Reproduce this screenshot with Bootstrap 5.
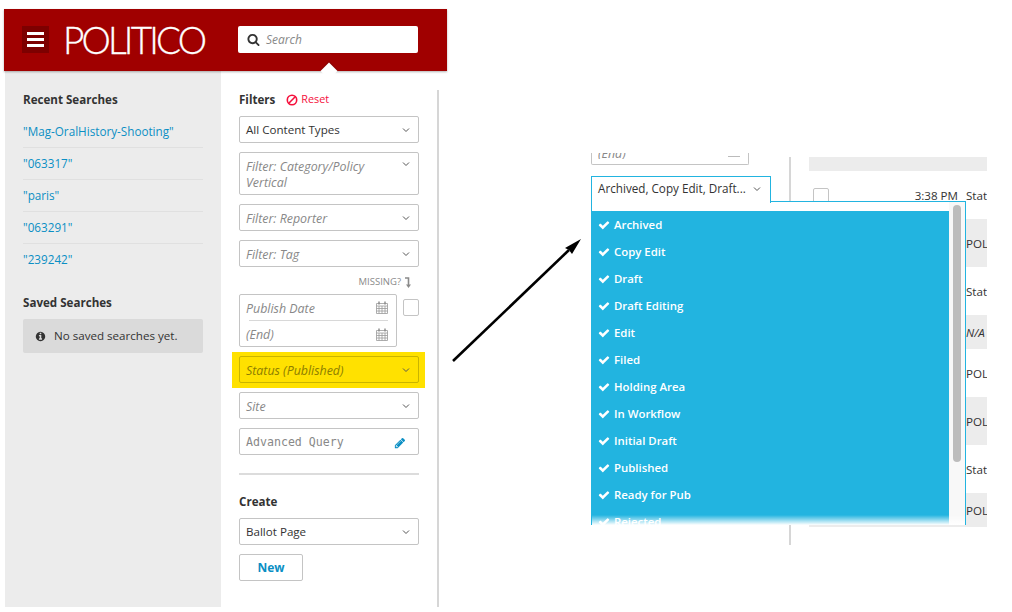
<!DOCTYPE html>
<html lang="en">
<head>
  <meta charset="UTF-8">
  <meta name="viewport" content="width=device-width, initial-scale=1">
  <title>Filters</title>
  <link href="https://cdn.jsdelivr.net/npm/bootstrap@5.3.2/dist/css/bootstrap.min.css" rel="stylesheet">
  <style>
    body {
      background: #fff;
      font-family: "Open Sans", "Liberation Sans", sans-serif;
      font-size: 11.6px;
      color: #333;
      width: 1012px;
      height: 612px;
      overflow: hidden;
    }
    .stage { padding: 9px 0 0 4px; height: 612px; }
    .app { width: 443px; height: 598px; }
    .topbar {
      background: #a00000;
      height: 62px;
      padding: 17px 29px 0 18px;
      box-shadow: 0 1px 2px rgba(0,0,0,.3);
      position: relative;
    }
    .topbar::after {
      content: "";
      position: absolute;
      left: 319px;
      top: 56px;
      width: 12px;
      height: 12px;
      background: #fff;
      transform: rotate(45deg);
      box-shadow: -1px -1px 1px rgba(0,0,0,.15);
    }
    .burger { width: 27px; height: 27px; background: #7d0000; padding: 6px 5px; }
    .burger span { display: block; height: 3px; background: #fff; margin-bottom: 3px; }
    .logo {
      font-family: "Lato", "Liberation Sans", sans-serif;
      font-weight: 300;
      font-size: 37px;
      line-height: 27px;
      letter-spacing: -2.85px;
      color: #fff;
      margin-left: 14px;
      width: 175px;
      -webkit-text-stroke: .3px #fff;
    }
    .searchbox {
      width: 180px;
      height: 27px;
      background: #fff;
      border-radius: 2px;
      padding-left: 9px;
      font-size: 12px;
      font-style: italic;
      color: #888;
      gap: 6px;
    }
    .panes { height: 536px; }
    .recent { width: 216px; margin-left: 1px; background: #ececec; padding: 21px 18px 0 18px; }
    .head-label { font-weight: 700; font-size: 11.6px; color: #333; line-height: 16px; }
    .recent-list { margin-top: 8px; }
    .recent-link {
      display: block;
      color: #0b8fc4;
      font-size: 11.7px;
      text-decoration: none;
      height: 32px;
      line-height: 31px;
      padding-top: 0;
      border-bottom: 1px solid #e0e0e0;
    }
    .recent-link:last-of-type { border-bottom: 0; }
    .saved-head { margin-top: 19px; }
    .no-saved {
      background: #dadada;
      border-radius: 2px;
      height: 34px;
      padding-left: 12px;
      gap: 8px;
      margin-top: 8px;
    }
    .filters { width: 216px; padding: 21px 0 0 18px; }
    .rule-v { width: 2px; background: #d6d6d6; margin-top: 19px; }
    .reset { color: #f5103c; font-size: 10.8px; gap: 3px; margin-left: 11px; }
    .filters-head { height: 15px; margin-bottom: 9px; }
    .fld {
      width: 180px;
      min-height: 27px;
      border: 1px solid #c4c4c4;
      border-radius: 2px;
      background: #fff;
      padding: 0 8px 0 6px;
      margin-bottom: 9px;
      color: #333;
      font-size: 11.6px;
      line-height: 16px;
    }
    .fld.ph { font-style: italic; color: #888; font-size: 12.4px; padding-top: 2px; }
    .fld .chev { flex: none; }
    .fld.ph .chev { margin-top: -2px; }
    .fld.ph.multi { height: 43px; padding-top: 6px; align-items: flex-start; }
    .fld.ph.multi .chev { margin-top: 2px; }
    .missing { font-size: 9.5px; color: #8a8a8a; gap: 3px; height: 26px; margin-top: -8px; padding-right: 7px; line-height: 27px; width: 180px; }
    .datebox { width: 158px; height: 53px; border: 1px solid #c4c4c4; border-radius: 2px; font-style: italic; color: #888; font-size: 12.4px; }
    .dateline { height: 26px; margin: 0 8px 0 6px; }
    .dateline span { padding-top: 3px; }
    .dateline:first-child { border-bottom: 1px solid #d8d8d8; margin-left: 9px; }
    .dateline:first-child span { margin-left: -3px; padding-top: 4px; }
    .tick { width: 16px; height: 17px; border: 1px solid #c4c4c4; border-radius: 2px; margin: 5px 0 0 6px; background: #fff; flex: none; }
    .hilite { background: #ffe100; width: 193px; height: 36px; margin: 5px 0 4px -7px; padding: 4px 0 0 7px; }
    .hilite .fld { background: #ffe100; border-color: #c9b400; color: #8c7d00; }
    .fld .mono { font-family: "DejaVu Sans Mono", "Liberation Mono", monospace; font-size: 11.6px; font-style: normal; margin-top: -2px; }
    .rule-h { height: 2px; background: #dcdcdc; width: 180px; margin: 18px 0 19px; }
    .new-btn {
      width: 64px;
      height: 27px;
      border: 1px solid #c4c4c4;
      border-radius: 2px;
      background: #fff;
      color: #0b8fc4;
      font-weight: 700;
      font-size: 12px;
      padding: 1px 0 0;
    }
    /* pasted second screenshot */
    .arrow-canvas { position: absolute; left: 450px; top: 230px; }
    .inset { position: absolute; left: 591px; top: 153px; width: 396px; height: 392px; overflow: hidden; }
    .inset-cols { height: 100%; }
    .inset-left { width: 180px; }
    .end-stub { width: 158px; height: 12px; border: 1px solid #c4c4c4; border-top: 0; border-radius: 0 0 2px 2px; padding: 0 8px 0 6px; color: #888; font-style: italic; font-size: 12.4px; }
    .end-clip { height: 6px; overflow: hidden; line-height: 1; }
    .end-clip span { display: block; margin-top: -5px; }
    .end-cal { width: 12px; height: 1px; background: #bbb; margin-top: 3px; }
    .inset-rule { width: 2px; background: #d6d6d6; margin: 4px 0 0 18px; }
    .inset-table { width: 178px; margin: 4px 0 0 18px; }
    .row-band { background: #ececec; padding: 2px 0 0 157px; white-space: nowrap; }
    .row-plain { padding: 2px 0 0 157px; white-space: nowrap; }
    .row-top { height: 48px; }
    .row-top .tick { margin: 17px 0 0 4px; }
    .row-time { width: 129px; padding-top: 16px; text-align: right; flex: none; }
    .row-type { margin-left: 8px; padding-top: 16px; }
    .h-14 { height: 14px; }
    .h-48 { height: 48px; }
    .h-34 { height: 34px; }
    .status-btn {
      position: absolute;
      left: 0;
      top: 23px;
      width: 180px;
      height: 27px;
      background: #fff;
      border: 1px solid #22b4e0;
      border-bottom: 0;
      padding: 0 9px 2px 6px;
      z-index: 2;
      font-size: 11.7px;
    }
    .status-panel {
      position: absolute;
      left: 0;
      top: 48px;
      width: 375px;
      height: 324px;
      background: #fff;
      border: 1px solid #22b4e0;
      border-bottom: 0;
      padding-top: 9px;
      overflow: hidden;
    }
    .status-list { width: 358px; margin-left: -1px; background: #22b4e0; height: 315px; overflow: hidden; color: #fff; font-weight: 600; font-size: 11.4px; }
    .status-item { height: 27px; padding-left: 7px; gap: 4px; }
    .status-fade { position: absolute; left: 0; right: 0; bottom: 0; height: 10px; background: linear-gradient(rgba(255,255,255,0), #fff); }
    .status-track { position: absolute; top: 0; bottom: 0; right: 0; width: 16px; background: #f8f8f8; }
    .status-thumb { position: absolute; left: 4px; top: 3px; width: 8px; height: 257px; background: #bcbcbc; border-radius: 4px; }
  </style>
</head>
<body>
  <svg width="0" height="0" class="position-absolute">
    <symbol id="chev" viewBox="0 0 8 6"><path d="M1 1.5 4 4.5 7 1.5" fill="none" stroke="#555" stroke-width="1"/></symbol>
    <symbol id="check" viewBox="0 0 1792 1792"><path d="M1671 566q0 40-28 68l-724 724-136 136q-28 28-68 28t-68-28l-136-136-362-362q-28-28-28-68t28-68l136-136q28-28 68-28t68 28l294 295 656-657q28-28 68-28t68 28l136 136q28 28 28 68z" fill="#fff"/></symbol>
    <symbol id="cal" viewBox="0 0 12 13"><path d="M.5 2.5h11v10H.5zM.5 5h11M.5 7.5h11M.5 10h11M3 5v7.5M6 5v7.5M9 5v7.5" fill="none" stroke="#999" stroke-width=".8"/><path d="M3 .5v3M9 .5v3" stroke="#888" stroke-width="1.4"/></symbol>
  </svg>

  <div class="stage">
    <div class="app">
      <div class="topbar d-flex align-items-start">
        <div class="burger"><span></span><span></span><span></span></div>
        <div class="logo">POLITICO</div>
        <div class="searchbox d-flex align-items-center">
          <svg width="13" height="13" viewBox="0 0 1792 1792"><path d="M1216 832q0-185-131.5-316.5t-316.5-131.5-316.5 131.5-131.5 316.5 131.5 316.5 316.5 131.5 316.5-131.5 131.5-316.5zm512 832q0 52-38 90t-90 38q-54 0-90-38l-343-342q-179 124-399 124-143 0-273.5-55.5t-225-150-150-225-55.5-273.5 55.5-273.5 150-225 225-150 273.5-55.5 273.5 55.5 225 150 150 225 55.5 273.5q0 220-124 399l343 343q37 37 37 90z" fill="#333"/></svg>
          <span>Search</span>
        </div>
      </div>
      <div class="panes d-flex">
        <div class="recent">
          <div class="head-label">Recent Searches</div>
          <div class="recent-list">
            <a class="recent-link" href="#">"Mag-OralHistory-Shooting"</a>
            <a class="recent-link" href="#">"063317"</a>
            <a class="recent-link" href="#">"paris"</a>
            <a class="recent-link" href="#">"063291"</a>
            <a class="recent-link" href="#">"239242"</a>
          </div>
          <div class="head-label saved-head">Saved Searches</div>
          <div class="no-saved d-flex align-items-center">
            <svg width="11" height="11" viewBox="0 0 1792 1792"><path d="M1152 1376v-160q0-14-9-23t-23-9h-96v-512q0-14-9-23t-23-9h-320q-14 0-23 9t-9 23v160q0 14 9 23t23 9h96v320h-96q-14 0-23 9t-9 23v160q0 14 9 23t23 9h448q14 0 23-9t9-23zm-128-896v-160q0-14-9-23t-23-9h-192q-14 0-23 9t-9 23v160q0 14 9 23t23 9h192q14 0 23-9t9-23zm640 416q0 209-103 385.5t-279.5 279.5-385.5 103-385.5-103-279.5-279.5-103-385.5 103-385.5 279.5-279.5 385.5-103 385.5 103 279.5 279.5 103 385.5z" fill="#333"/></svg>
            <span>No saved searches yet.</span>
          </div>
        </div>
        <div class="filters">
          <div class="filters-head d-flex align-items-center">
            <span class="head-label">Filters</span>
            <span class="reset d-flex align-items-center">
              <svg width="12" height="12" viewBox="0 0 12 12"><circle cx="6" cy="6" r="4.7" fill="none" stroke="#f5103c" stroke-width="1.6"/><path d="M2.8 9.2 9.2 2.8" stroke="#f5103c" stroke-width="1.6"/></svg>
              Reset
            </span>
          </div>
          <div class="fld d-flex align-items-center justify-content-between"><span>All Content Types</span><svg class="chev" width="8" height="6"><use href="#chev"/></svg></div>
          <div class="fld ph multi d-flex justify-content-between"><span>Filter: Category/Policy<br>Vertical</span><svg class="chev" width="8" height="6"><use href="#chev"/></svg></div>
          <div class="fld ph d-flex align-items-center justify-content-between"><span>Filter: Reporter</span><svg class="chev" width="8" height="6"><use href="#chev"/></svg></div>
          <div class="fld ph d-flex align-items-center justify-content-between"><span>Filter: Tag</span><svg class="chev" width="8" height="6"><use href="#chev"/></svg></div>
          <div class="missing d-flex justify-content-end">
            <span>MISSING?</span>
            <svg width="8" height="14" viewBox="0 0 8 14" class="mt-2"><path d="M1 2h3.5v7" fill="none" stroke="#8a8a8a" stroke-width="1.6"/><path d="M2 8.5h5L4.5 12z" fill="#8a8a8a"/></svg>
          </div>
          <div class="d-flex">
            <div class="datebox">
              <div class="dateline d-flex align-items-center justify-content-between"><span>Publish Date</span><svg width="12" height="13"><use href="#cal"/></svg></div>
              <div class="dateline d-flex align-items-center justify-content-between"><span>(End)</span><svg width="12" height="13"><use href="#cal"/></svg></div>
            </div>
            <div class="tick"></div>
          </div>
          <div class="hilite">
            <div class="fld ph d-flex align-items-center justify-content-between"><span>Status (Published)</span><svg class="chev" width="8" height="6"><use href="#chev"/></svg></div>
          </div>
          <div class="fld ph d-flex align-items-center justify-content-between"><span>Site</span><svg class="chev" width="8" height="6"><use href="#chev"/></svg></div>
          <div class="fld ph d-flex align-items-center justify-content-between mb-0"><span class="mono">Advanced Query</span>
            <svg width="12" height="12" viewBox="0 0 1792 1792" class="me-1"><path d="M491 1536l91-91-235-235-91 91v107h128v128h107zm523-928q0-22-22-22-10 0-17 7l-542 542q-7 7-7 17 0 22 22 22 10 0 17-7l542-542q7-7 7-17zm-54-192l416 416-832 832h-416v-416zm683 96q0 53-37 90l-166 166-416-416 166-165q36-38 90-38 53 0 91 38l235 234q37 39 37 91z" fill="#0b8fc4"/></svg>
          </div>
          <div class="rule-h"></div>
          <div class="head-label mb-2">Create</div>
          <div class="fld d-flex align-items-center justify-content-between"><span>Ballot Page</span><svg class="chev" width="8" height="6"><use href="#chev"/></svg></div>
          <button class="new-btn" type="button">New</button>
        </div>
        <div class="rule-v"></div>
      </div>
    </div>
  </div>

  <svg class="arrow-canvas" width="136" height="136" viewBox="0 0 136 136">
    <path d="M3 131 119 20" stroke="#000" stroke-width="2.6"/>
    <path d="M131 9 122 24 119 20 115 18z" fill="#000"/>
  </svg>

  <div class="inset">
    <div class="inset-cols d-flex">
      <div class="inset-left">
        <div class="end-stub d-flex justify-content-between">
          <div class="end-clip"><span>(End)</span></div>
          <div class="end-cal"></div>
        </div>
      </div>
      <div class="inset-rule"></div>
      <div class="inset-table">
        <div class="row-band h-14"></div>
        <div class="row-top d-flex">
          <div class="tick"></div>
          <span class="row-time">3:38 PM</span>
          <span class="row-type">Stat</span>
        </div>
        <div class="row-band h-48 d-flex align-items-center">POL</div>
        <div class="row-plain h-48 d-flex align-items-center">Stat</div>
        <div class="row-band h-34 d-flex align-items-center fst-italic">N/A</div>
        <div class="row-plain h-48 d-flex align-items-center">POL</div>
        <div class="row-band h-48 d-flex align-items-center">POL</div>
        <div class="row-plain h-48 d-flex align-items-center">Stat</div>
        <div class="row-band h-34 d-flex align-items-center">POL</div>
      </div>
    </div>

    <div class="status-btn d-flex align-items-center justify-content-between"><span>Archived, Copy Edit, Draft...</span><svg width="8" height="6"><use href="#chev"/></svg></div>
    <div class="status-panel">
      <div class="status-list">
        <div class="status-item d-flex align-items-center"><svg width="12" height="12"><use href="#check"/></svg>Archived</div>
        <div class="status-item d-flex align-items-center"><svg width="12" height="12"><use href="#check"/></svg>Copy Edit</div>
        <div class="status-item d-flex align-items-center"><svg width="12" height="12"><use href="#check"/></svg>Draft</div>
        <div class="status-item d-flex align-items-center"><svg width="12" height="12"><use href="#check"/></svg>Draft Editing</div>
        <div class="status-item d-flex align-items-center"><svg width="12" height="12"><use href="#check"/></svg>Edit</div>
        <div class="status-item d-flex align-items-center"><svg width="12" height="12"><use href="#check"/></svg>Filed</div>
        <div class="status-item d-flex align-items-center"><svg width="12" height="12"><use href="#check"/></svg>Holding Area</div>
        <div class="status-item d-flex align-items-center"><svg width="12" height="12"><use href="#check"/></svg>In Workflow</div>
        <div class="status-item d-flex align-items-center"><svg width="12" height="12"><use href="#check"/></svg>Initial Draft</div>
        <div class="status-item d-flex align-items-center"><svg width="12" height="12"><use href="#check"/></svg>Published</div>
        <div class="status-item d-flex align-items-center"><svg width="12" height="12"><use href="#check"/></svg>Ready for Pub</div>
        <div class="status-item d-flex align-items-center"><svg width="12" height="12"><use href="#check"/></svg>Rejected</div>
      </div>
      <div class="status-track"><div class="status-thumb"></div></div>
      <div class="status-fade"></div>
    </div>
  </div>

  <script src="https://cdn.jsdelivr.net/npm/bootstrap@5.3.2/dist/js/bootstrap.bundle.min.js"></script>
</body>
</html>
